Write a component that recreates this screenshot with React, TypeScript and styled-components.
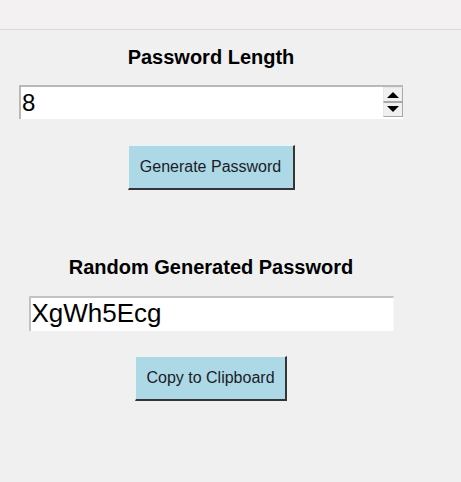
import React from "react";
import styled, { createGlobalStyle } from "styled-components";

const Global = createGlobalStyle`
  html, body { margin: 0; padding: 0; background: #f0f0f0; }
  body { font-family: "Liberation Sans", Arial, sans-serif; color: #000; }
  * { box-sizing: border-box; }
`;

const TitleStrip = styled.div`
  height: 30px;
  background: #f3f1f1;
  border-bottom: 1px solid #d9d9d9;
`;

const Content = styled.div`
  width: 422px;
  display: flex;
  flex-direction: column;
  align-items: center;
`;

const Label = styled.div<{ $top: number }>`
  margin-top: ${(p) => p.$top}px;
  font-size: 20px;
  font-weight: bold;
  line-height: 23px;
  height: 23px;
  white-space: nowrap;
`;

const SpinBox = styled.div`
  margin-top: 16px;
  width: 384px;
  height: 34px;
  display: flex;
  background: #fff;
  border-top: 2px solid #b9b9b9;
  border-left: 2px solid #b9b9b9;
`;

const SpinValue = styled.div`
  flex: 1;
  font-size: 24px;
  line-height: 32px;
  padding-left: 1px;
`;

const SpinButtons = styled.div`
  width: 20px;
  display: flex;
  flex-direction: column;
  padding-bottom: 2px;
`;

const SpinButton = styled.div`
  flex: 1;
  display: flex;
  align-items: center;
  justify-content: center;
  background: #f0f0f0;
  border: 1px solid #a8a8a8;
  border-left-color: #e8e8e8;
  border-top-color: #e8e8e8;
  & + & { border-top: 1px solid #a8a8a8; }
`;

const Arrow = ({ down }: { down?: boolean }) => (
  <svg width="12" height="7" viewBox="0 0 12 7">
    <polygon points={down ? "0,0 12,0 6,6" : "0,7 12,7 6,1"} fill="#000" />
  </svg>
);

const Button = styled.div<{ $top: number; $w: number }>`
  margin-top: ${(p) => p.$top}px;
  width: ${(p) => p.$w}px;
  height: 45px;
  display: flex;
  align-items: center;
  justify-content: center;
  background: #add8e6;
  font-size: 16px;
  color: #1c1c28;
  border-style: solid;
  border-width: 1px 2px 2px 1px;
  border-color: #e6f4f8 #353535 #353535 #e6f4f8;
  white-space: nowrap;
`;

const Entry = styled.div`
  margin-top: 17px;
  width: 365px;
  height: 35px;
  background: #fff;
  border-top: 2px solid #c2c2c2;
  border-left: 2px solid #c2c2c2;
  border-right: 1px solid #f8f8f8;
  font-size: 26px;
  line-height: 31px;
  padding-left: 1px;
  white-space: nowrap;
`;

export default function App() {
  return (
    <>
      <Global />
      <TitleStrip />
      <Content>
        <Label $top={16}>Password Length</Label>
        <SpinBox>
          <SpinValue>8</SpinValue>
          <SpinButtons>
            <SpinButton>
              <Arrow />
            </SpinButton>
            <SpinButton>
              <Arrow down />
            </SpinButton>
          </SpinButtons>
        </SpinBox>
        <Button $top={26} $w={167}>Generate Password</Button>
        <Label $top={66}>Random Generated Password</Label>
        <Entry>XgWh5Ecg</Entry>
        <Button $top={25} $w={152}>Copy to Clipboard</Button>
      </Content>
    </>
  );
}
